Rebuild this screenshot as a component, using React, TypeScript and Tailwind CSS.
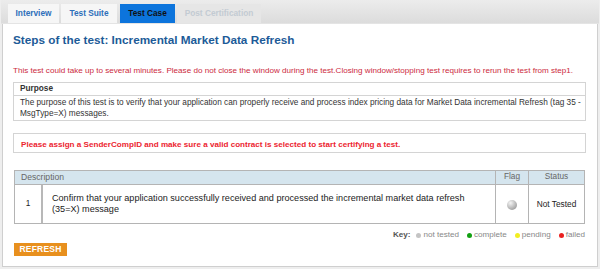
const tabs = [
  { label: "Interview", w: "w-[51px]", state: "normal" },
  { label: "Test Suite", w: "w-[56px]", state: "normal" },
  { label: "Test Case", w: "w-[55px]", state: "active" },
  { label: "Post Certification", w: "w-[84px]", state: "disabled" },
]

const keyItems = [
  { label: "not tested", dot: "bg-[#c4c4c4]" },
  { label: "complete", dot: "bg-[#12a012]" },
  { label: "pending", dot: "bg-[#f2ee22]" },
  { label: "failed", dot: "bg-[#ea2020]" },
]

const App = () => {
  return (
    <div className="w-[600px] h-[269px] bg-[#eeeeee] font-['Liberation_Sans',Arial,sans-serif] overflow-hidden">
      <div className="ml-[2px] w-[596px] h-[267px] bg-white border-x border-b border-[#cfcfcf] flex flex-col">
        {/* tab strip */}
        <div className="h-[24px] -ml-[2px] w-[598px] bg-gradient-to-b from-[#ececec] to-[#dcdcdc] border-b border-[#e4e4e4] flex items-end pl-[7px] gap-[2px]">
          {tabs.map((tab, idx) => (
            <div
              key={idx}
              className={`${tab.w} h-[19px] flex items-center justify-center text-[8.3px] font-bold ${idx === 2 ? "ml-[1px]" : ""} ${
                tab.state === "active"
                  ? "bg-[#0c74dc] text-[#111]"
                  : tab.state === "disabled"
                  ? "bg-[#e6e6e6] text-[#c3cbd3]"
                  : "bg-[#f6f6f6] text-[#2d6fba]"
              }`}
            >
              {tab.label}
            </div>
          ))}
        </div>

        <div className="pl-[10px] pr-[12px]">
          <h1 className="mt-[8px] text-[11.75px] leading-[15px] font-bold text-[#1d5b98]">
            Steps of the test: Incremental Market Data Refresh
          </h1>

          <p className="mt-[19px] text-[8.1px] leading-[10px] text-[#cc2a40] whitespace-nowrap">
            This test could take up to several minutes. Please do not close the window during the test.Closing window/stopping test requires to rerun the test from step1.
          </p>

          <div className="mt-[6px] w-[573px] border border-[#d4d4d4]">
            <div className="h-[13px] flex items-center px-[6px] border-b border-[#d4d4d4] text-[8.25px] font-bold text-[#333]">
              Purpose
            </div>
            <div className="px-[6px] pt-[1px] pb-[1px] text-[8.25px] leading-[11px] text-[#333] whitespace-nowrap">
              The purpose of this test is to verify that your application can properly receive and process index pricing data for Market Data incremental Refresh (tag 35 -
              <br />
              MsgType=X) messages.
            </div>
          </div>

          <div className="mt-[12px] w-[573px] h-[20px] border border-[#d4d4d4] flex items-center pl-[7px] pt-[4px] text-[8.1px] font-bold text-[#ec2430]">
            Please assign a SenderCompID and make sure a valid contract is selected to start certifying a test.
          </div>

          <div className="mt-[17px] ml-[1px] w-[571px] border border-[#b4b4b4] text-[8.25px]">
            <div className="flex h-[14px] bg-[#d5e5ee] border-b border-[#b4b4b4] text-[#666]">
              <div className="flex-1 flex items-center pl-[6px] text-[8.6px]">Description</div>
              <div className="w-[33px] border-l border-[#b4b4b4] flex items-center justify-center">Flag</div>
              <div className="w-[56px] border-l border-[#b4b4b4] flex items-center justify-center">Status</div>
            </div>
            <div className="flex h-[38px] text-[#222]">
              <div className="w-[28px] border-r-2 border-[#b8b8b8] flex items-center justify-center">1</div>
              <div className="flex-1 flex flex-col justify-center pl-[9px] text-[9.1px] leading-[11px] whitespace-nowrap">
                <span>Confirm that your application successfully received and processed the incremental market data refresh</span>
                <span>(35=X) message</span>
              </div>
              <div className="w-[33px] border-l border-[#b4b4b4] flex items-center justify-center">
                <div className="w-[10px] h-[10px] mt-[2px] rounded-full bg-[radial-gradient(circle_at_35%_30%,#f4f4f4,#a8a8a8_70%,#8c8c8c)]" />
              </div>
              <div className="w-[56px] border-l border-[#b4b4b4] flex items-center justify-center text-[8.3px]">
                Not Tested
              </div>
            </div>
          </div>

          <div className="mt-[5px] w-[572px] flex justify-end items-center gap-[8px] text-[8.1px] text-[#888]">
            <span className="font-bold text-[#555] -mr-[2px]">Key:</span>
            {keyItems.map((item, idx) => (
              <span key={idx} className="flex items-center gap-[2px]">
                <span className={`w-[5px] h-[5px] rounded-full ${item.dot}`} />
                {item.label}
              </span>
            ))}
          </div>

          <button className="mt-[2px] ml-[1px] w-[53px] h-[13px] bg-[#e8901e] text-white text-[8.5px] font-bold flex items-center justify-center tracking-[0.2px]">
            REFRESH
          </button>
        </div>
      </div>
    </div>
  )
}

export default App
